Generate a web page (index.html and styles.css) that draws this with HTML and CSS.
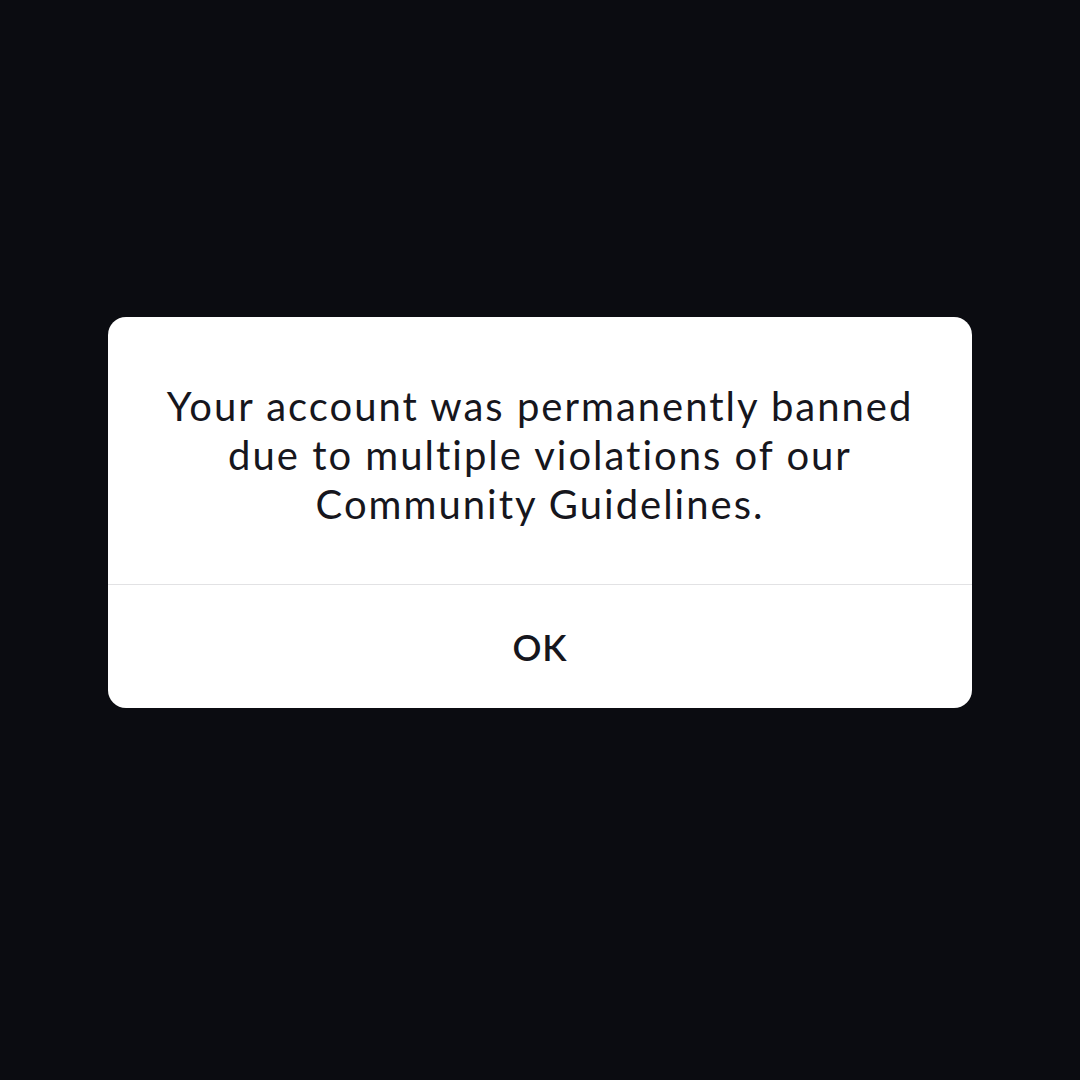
FILE: index.html
```html
<!DOCTYPE html>
<html>
<head>
<meta charset="utf-8">
<link rel="stylesheet" href="styles.css">
</head>
<body>
<div class="screen">
  <div class="dialog">
    <p class="message">Your account was permanently banned<br>due to multiple violations of our<br>Community Guidelines.</p>
    <div class="divider"></div>
    <button class="ok">OK</button>
  </div>
</div>
</body>
</html>
```
FILE: styles.css
```css
html, body {
  margin: 0;
  padding: 0;
  background: #0b0c11;
}
.screen {
  width: 1080px;
  height: 1080px;
  display: flex;
  justify-content: center;
  align-items: flex-start;
  padding-top: 317px;
  box-sizing: border-box;
}
.dialog {
  width: 864px;
  background: #ffffff;
  border-radius: 18px;
  display: flex;
  flex-direction: column;
  overflow: hidden;
}
.message {
  margin: 0;
  padding: 65px 30px 55px;
  font-family: Lato, "Liberation Sans", sans-serif;
  font-size: 40px;
  line-height: 49px;
  letter-spacing: 2px;
  color: #16161d;
  text-align: center;
}
.divider {
  height: 1px;
  background: #e2e2e4;
}
.ok {
  height: 123px;
  border: 0;
  background: transparent;
  font-family: Lato, "Liberation Sans", sans-serif;
  font-size: 36px;
  font-weight: 600;
  letter-spacing: 1px;
  color: #16161d;
  padding: 0;
}
```
